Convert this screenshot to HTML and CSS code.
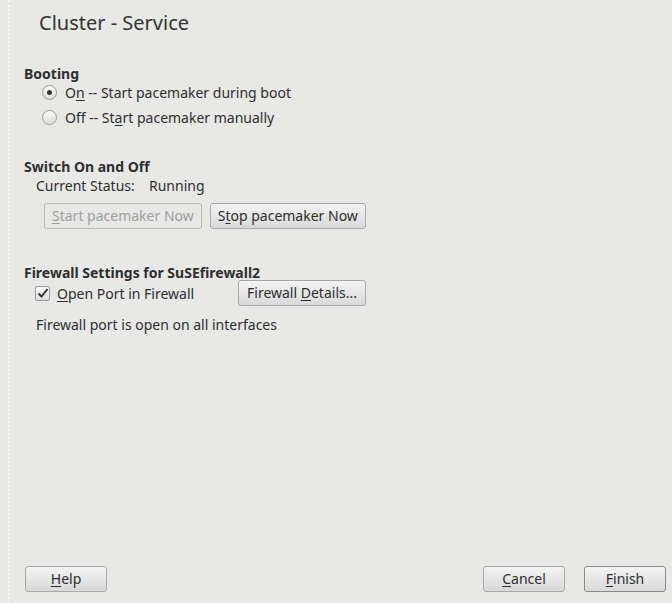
FILE: index.html
```html
<!DOCTYPE html>
<html>
<head>
<meta charset="utf-8">
<link rel="stylesheet" href="styles.css">
</head>
<body>
<div class="page">
  <h1 class="title">Cluster - Service</h1>
  <div class="content">
    <section class="group booting">
      <div class="group-title">Booting</div>
      <label class="radio-row"><span class="radio checked"></span><span>O<u>n</u> -- Start pacemaker during boot</span></label>
      <label class="radio-row"><span class="radio"></span><span>Off -- St<u>a</u>rt pacemaker manually</span></label>
    </section>
    <section class="group switch">
      <div class="group-title">Switch On and Off</div>
      <div class="status"><span class="status-label">Current Status:</span><span>Running</span></div>
      <div class="btn-row">
        <button class="btn disabled"><u>S</u>tart pacemaker Now</button>
        <button class="btn">S<u>t</u>op pacemaker Now</button>
      </div>
    </section>
    <section class="group firewall">
      <div class="group-title">Firewall Settings for SuSEfirewall2</div>
      <div class="fw-row">
        <label class="check-row"><span class="checkbox"><svg width="12" height="12" viewBox="0 0 12 12"><path d="M1.5 6.5 L4.5 9.5 L10.5 2" fill="none" stroke="#333" stroke-width="2"/></svg></span><span><u>O</u>pen Port in Firewall</span></label>
        <button class="btn details">Firewall <u>D</u>etails...</button>
      </div>
      <div class="fw-note">Firewall port is open on all interfaces</div>
    </section>
  </div>
  <div class="footer">
    <button class="btn wide"><u>H</u>elp</button>
    <div class="spacer"></div>
    <button class="btn wide"><u>C</u>ancel</button>
    <button class="btn wide default"><u>F</u>inish</button>
  </div>
</div>
</body>
</html>
```
FILE: styles.css
```css
html, body {
  margin: 0;
  padding: 0;
  background: #e8e8e7;
}
body {
  font-family: "Noto Sans", "DejaVu Sans", sans-serif;
  font-size: 14px;
  color: #2e2e2e;
}
.page {
  margin-left: 8px;
  border-left: 2px dotted #f7f7f6;
  height: 603px;
  box-sizing: border-box;
  display: flex;
  flex-direction: column;
}
.title {
  margin: 9px 0 0 29px;
  font-size: 20px;
  font-weight: normal;
  line-height: 28px;
  color: #333;
}
.content {
  flex: 1;
  padding-left: 14px;
  padding-top: 27px;
}
.group-title {
  font-weight: bold;
  line-height: 19px;
}
u { text-decoration: underline; text-underline-offset: 2px; }
.booting .group-title { margin-bottom: -3px; }
.radio-row {
  display: flex;
  align-items: center;
  height: 25px;
  padding-left: 18px;
  gap: 8px;
}
.radio {
  width: 13px;
  height: 13px;
  border-radius: 50%;
  border: 1px solid #9a9a9a;
  background: linear-gradient(#fbfbfb, #dcdcdc);
  position: relative;
  box-sizing: content-box;
}
.radio.checked::after {
  content: "";
  position: absolute;
  left: 4px;
  top: 4px;
  width: 5px;
  height: 5px;
  border-radius: 50%;
  background: #333;
}
.switch { margin-top: 27px; }
.status {
  padding-left: 12px;
  line-height: 19px;
  display: flex;
}
.status-label { width: 113px; }
.btn-row {
  display: flex;
  gap: 8px;
  padding-left: 20px;
  margin-top: 8px;
}
.btn {
  font-family: inherit;
  font-size: 14px;
  color: #2e2e2e;
  height: 26px;
  padding: 0 7px;
  border: 1px solid #a8a8a8;
  border-radius: 3px;
  background: linear-gradient(#f4f4f4, #d9d9d9);
  box-sizing: border-box;
  line-height: 22px;
}
.btn.disabled {
  color: #9e9e9e;
  background: #e8e8e7;
  border-color: #b8b8b8;
}
.btn.details { width: 128px; }
.firewall { margin-top: 34px; }
.fw-row {
  display: flex;
  align-items: center;
  margin-top: -2px;
  padding-left: 11px;
}
.check-row {
  display: flex;
  align-items: center;
  gap: 7px;
  width: 203px;
}
.checkbox {
  width: 13px;
  height: 13px;
  border: 1px solid #9a9a9a;
  border-radius: 2px;
  background: linear-gradient(#fbfbfb, #dcdcdc);
  display: flex;
  align-items: center;
  justify-content: center;
}
.fw-note {
  padding-left: 12px;
  margin-top: 9px;
  line-height: 19px;
}
.footer {
  display: flex;
  align-items: center;
  padding: 0 6px 11px 15px;
  gap: 19px;
}
.spacer { flex: 1; }
.btn.wide { width: 82px; }
.btn.default { border-color: #8a8a8a; }
```
